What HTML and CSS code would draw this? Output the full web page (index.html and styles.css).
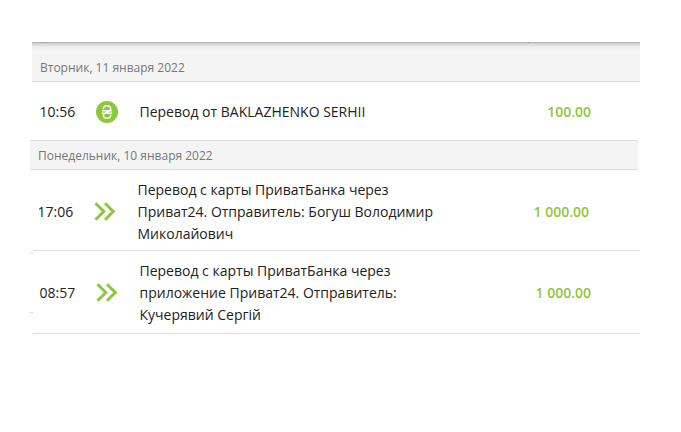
FILE: index.html
```html
<!DOCTYPE html>
<html lang="ru">
<head>
<meta charset="utf-8">
<title>Выписка</title>
<link rel="stylesheet" href="styles.css">
</head>
<body>
<main class="list">
  <span class="clip clip-left"></span>
  <span class="clip clip-right"></span>
  <div class="day day-first">Вторник, 11 января 2022</div>
  <div class="row row-a">
    <span class="time">10:56</span>
    <span class="icon"><svg width="22" height="22" viewBox="0 0 22 22"><circle cx="11" cy="11" r="11" fill="#8dc63f"/><path d="M7.300 8.300C7.300 6 9 4.700 11 4.700s3.600 1.200 3.600 3c0 1.700-1.300 2.500-3.100 3.300-1.800.8-4.100 1.500-4.100 3.300 0 1.800 1.600 3 3.600 3s3.700-1.300 3.700-3.600M6 9.700h10M6 12.300h10" fill="none" stroke="#fff" stroke-width="1.400"/></svg></span>
    <span class="text">Перевод от BAKLAZHENKO SERHII</span>
    <span class="sum">100.00</span>
  </div>
  <div class="day day-second">Понедельник, 10 января 2022</div>
  <div class="row row-b">
    <span class="time">17:06</span>
    <span class="icon icon-arrows"><svg width="22" height="21" viewBox="0 0 22 21"><path d="M1.500 2.200l8.300 8.300-8.300 8.300M11 2.200l8.300 8.300-8.300 8.300" fill="none" stroke="#8dc63f" stroke-width="3"/></svg></span>
    <span class="text">Перевод с карты ПриватБанка через Приват24. Отправитель: Богуш Володимир Миколайович</span>
    <span class="sum">1 000.00</span>
  </div>
  <div class="row row-c">
    <span class="time">08:57</span>
    <span class="icon icon-arrows"><svg width="22" height="21" viewBox="0 0 22 21"><path d="M1.500 2.200l8.300 8.300-8.300 8.300M11 2.200l8.300 8.300-8.300 8.300" fill="none" stroke="#8dc63f" stroke-width="3"/></svg></span>
    <span class="text">Перевод с карты ПриватБанка через приложение Приват24. Отправитель: Кучерявий Сергій</span>
    <span class="sum">1 000.00</span>
  </div>
</main>
</body>
</html>
```
FILE: styles.css
```css
* { box-sizing: border-box; }
html, body { margin: 0; padding: 0; background: #fff; }
body { font-family: "Open Sans", sans-serif; color: #222; width: 681px; height: 432px; overflow: hidden; }
.list { position: relative; margin: 42px 0 0 32px; width: 608px; }
.clip { position: absolute; top: 0; height: 1px; background: #9a9a9a; z-index: 1; }
.clip-left { left: 8px; width: 8px; opacity: .5; }
.clip-right { left: 496px; width: 2px; }
.day { background: #f4f4f4; color: #777; font-size: 12px; line-height: 16px; border-bottom: 1px solid #ddd; }
.day-first { height: 40px; padding: 18px 0 0 8px; background: linear-gradient(#b0b0b0, #d8d8d8 2px, #eeeeee 5px, #f4f4f4 8px); }
.day-second { height: 30px; padding: 7px 0 0 8px; margin: 0 2px 0 -2px; border-top: 1px solid #ddd; }
.row { position: relative; display: flex; align-items: center; font-size: 14px; line-height: 22px; }
.row-a { height: 58px; padding: 1px 0 0 8px; }
.row-b { height: 81px; padding: 3px 0 0 6px; }
.row-c { height: 83px; padding: 1px 0 0 8px; }
.row-b::after, .row-c::after { content: ""; position: absolute; left: 1px; right: 0; bottom: 0; height: 1px; background: #ddd; }
.row-c::before { content: ""; position: absolute; left: -2px; top: 1px; width: 3px; height: 1px; background: #ddd; box-shadow: 0 60px 0 #ddd; }
.time { width: 56.500px; margin-left: -0.500px; flex: none; }
.icon { width: 43.500px; flex: none; display: flex; }
.icon-arrows { margin-top: -2px; }
.text { width: 300px; flex: none; }
.sum { color: #8dc63f; font-weight: 600; width: 151.500px; text-align: right; flex: none; }
```
